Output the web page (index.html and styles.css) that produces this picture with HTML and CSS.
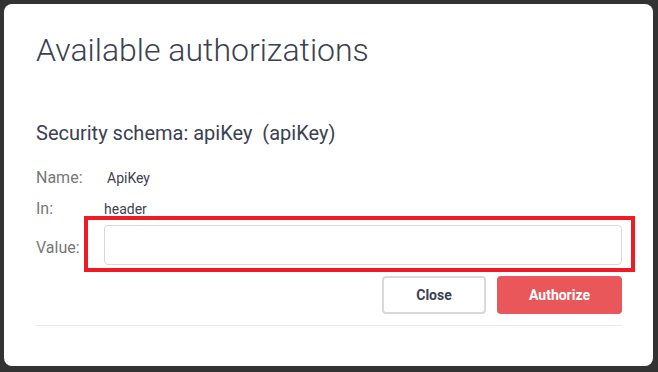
FILE: index.html
```html
<!DOCTYPE html>
<html lang="en">
<head>
  <meta charset="UTF-8">
  <meta name="viewport" content="width=device-width, initial-scale=1.0">
  <title>Available authorizations</title>
  <link rel="stylesheet" href="styles.css">
</head>
<body>
<div class="backdrop">
  <div class="modal">
    <h2 class="modal-title">Available authorizations</h2>

    <div class="auth-container">
      <h4 class="schema-title">Security schema: apiKey&nbsp; (apiKey)</h4>

      <div class="row">
        <span class="label">Name:</span>
        <span class="value name-value">ApiKey</span>
      </div>
      <div class="row">
        <span class="label">In:</span>
        <span class="value">header</span>
      </div>
      <div class="row value-row">
        <label class="label" for="apiKeyValue">Value:</label>
        <div class="input-wrap">
          <input type="text" id="apiKeyValue" name="apiKeyValue">
          <span class="highlight"></span>
        </div>
      </div>

      <div class="buttons">
        <button class="btn btn-close">Close</button>
        <button class="btn btn-authorize">Authorize</button>
      </div>
      <hr class="divider">
    </div>
  </div>
</div>
</body>
</html>
```

FILE: styles.css
```css
html, body {
  margin: 0;
  padding: 0;
  background-color: #333;
  font-family: Roboto, "Liberation Sans", sans-serif;
}

.backdrop {
  padding: 4px 5px 6px 4px;
  height: 362px;
}

.modal {
  background-color: #fff;
  border-radius: 8px;
  height: 362px;
  box-sizing: border-box;
  padding: 26px 31px 0 32px;
}

.modal-title {
  margin: 0;
  font-size: 32px;
  font-weight: 300;
  line-height: 40px;
  color: #3b4151;
}

.auth-container {
  padding-top: 51px;
}

.schema-title {
  margin: 0 0 23px 0;
  font-size: 20px;
  font-weight: 400;
  line-height: 24px;
  color: #3b4151;
}

.row {
  display: grid;
  grid-template-columns: 68px 1fr;
  align-items: center;
  line-height: 20px;
  margin-bottom: 11px;
}

.label {
  font-size: 16px;
  color: #777;
}

.value {
  font-size: 14px;
  color: #3b4151;
}

.name-value {
  padding-left: 3px;
}

.value-row {
  margin-top: -5px;
  margin-bottom: 0;
}

.value-row .label {
  padding-top: 6px;
}

.input-wrap {
  position: relative;
}

.input-wrap input {
  display: block;
  width: 100%;
  height: 40px;
  box-sizing: border-box;
  border: 1px solid #d9d9d9;
  border-radius: 4px;
  padding: 8px 10px;
  font-family: inherit;
  font-size: 14px;
}

.highlight {
  position: absolute;
  left: -20px;
  top: -9px;
  right: -13px;
  bottom: -7px;
  border: 4px solid #ed1c24;
  pointer-events: none;
}

.buttons {
  display: flex;
  justify-content: flex-end;
  gap: 11px;
  margin-top: 11px;
}

.btn {
  height: 38px;
  border-radius: 4px;
  font-family: inherit;
  font-size: 14px;
  font-weight: 700;
  cursor: pointer;
}

.btn-close {
  width: 104px;
  background-color: #fff;
  border: 2px solid #d9d9d9;
  color: #3b4151;
}

.btn-authorize {
  width: 125px;
  background-color: #e9575a;
  border: 2px solid #e9575a;
  color: #fff;
}

.divider {
  margin: 11px 0 0 0;
  border: none;
  border-top: 1px solid #ebebeb;
}
```
